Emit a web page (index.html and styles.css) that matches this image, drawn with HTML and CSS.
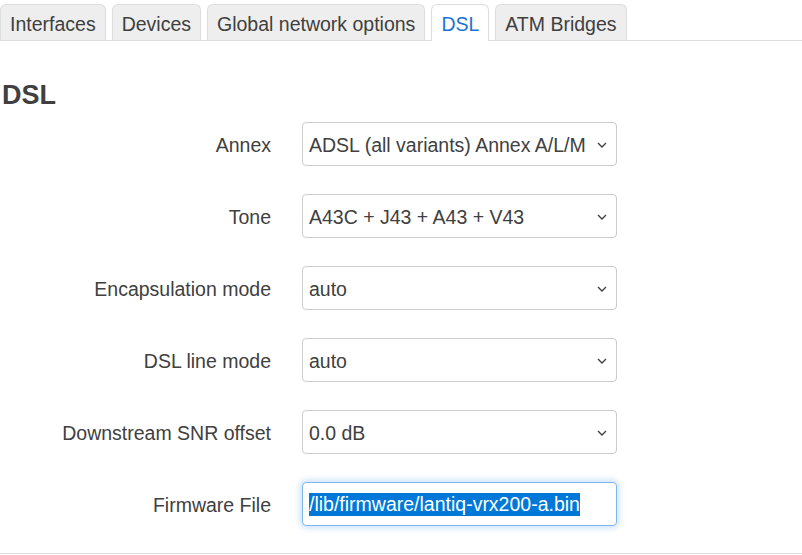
FILE: index.html
```html
<!DOCTYPE html>
<html lang="en">
<head>
<meta charset="utf-8">
<title>Network - DSL</title>
<link rel="stylesheet" href="styles.css">
</head>
<body>
  <ul class="tabmenu">
    <li class="tab"><a href="#">Interfaces</a></li>
    <li class="tab"><a href="#">Devices</a></li>
    <li class="tab"><a href="#">Global network options</a></li>
    <li class="tab active"><a href="#">DSL</a></li>
    <li class="tab"><a href="#">ATM Bridges</a></li>
  </ul>

  <section class="section">
    <h3 class="section-title">DSL</h3>

    <div class="fields">
      <div class="field">
        <label class="field-label">Annex</label>
        <div class="select-wrap">
          <select class="control">
            <option>ADSL (all variants) Annex A/L/M</option>
          </select>
          <svg class="chevron" viewBox="0 0 10 6" width="10" height="6"><path d="M1 1l4 4 4-4" fill="none" stroke="#404040" stroke-width="1.4"/></svg>
        </div>
      </div>

      <div class="field">
        <label class="field-label">Tone</label>
        <div class="select-wrap">
          <select class="control">
            <option>A43C + J43 + A43 + V43</option>
          </select>
          <svg class="chevron" viewBox="0 0 10 6" width="10" height="6"><path d="M1 1l4 4 4-4" fill="none" stroke="#404040" stroke-width="1.4"/></svg>
        </div>
      </div>

      <div class="field">
        <label class="field-label">Encapsulation mode</label>
        <div class="select-wrap">
          <select class="control">
            <option>auto</option>
          </select>
          <svg class="chevron" viewBox="0 0 10 6" width="10" height="6"><path d="M1 1l4 4 4-4" fill="none" stroke="#404040" stroke-width="1.4"/></svg>
        </div>
      </div>

      <div class="field">
        <label class="field-label">DSL line mode</label>
        <div class="select-wrap">
          <select class="control">
            <option>auto</option>
          </select>
          <svg class="chevron" viewBox="0 0 10 6" width="10" height="6"><path d="M1 1l4 4 4-4" fill="none" stroke="#404040" stroke-width="1.4"/></svg>
        </div>
      </div>

      <div class="field">
        <label class="field-label">Downstream SNR offset</label>
        <div class="select-wrap">
          <select class="control">
            <option>0.0 dB</option>
          </select>
          <svg class="chevron" viewBox="0 0 10 6" width="10" height="6"><path d="M1 1l4 4 4-4" fill="none" stroke="#404040" stroke-width="1.4"/></svg>
        </div>
      </div>

      <div class="field">
        <label class="field-label">Firmware File</label>
        <div class="control textfield focused"><span class="selected-text">/lib/firmware/lantiq-vrx200-a.bin</span></div>
      </div>
    </div>
  </section>
</body>
</html>
```

FILE: styles.css
```css
html, body {
  margin: 0;
  padding: 0;
  background: #fff;
}

body {
  font-family: "Liberation Sans", Arial, sans-serif;
  font-size: 19.5px;
  color: #404040;
  width: 802px;
  height: 555px;
  overflow: hidden;
}

/* tab strip */
.tabmenu {
  list-style: none;
  margin: 0;
  padding: 4px 0 0 0;
  display: flex;
  gap: 6px;
  border-bottom: 1px solid #ddd;
}

.tab {
  margin-bottom: -1px;
}

.tab a {
  display: block;
  box-sizing: border-box;
  height: 36px;
  line-height: 34px;
  padding: 2px 9px 0;
  background: #eee;
  border: 1px solid #ddd;
  border-bottom: none;
  border-radius: 6px 6px 0 0;
  color: #404040;
  text-decoration: none;
}

.tab.active a {
  background: #fff;
  color: #1b74d4;
  height: 37px;
}

/* section */
.section {
  padding: 0 0 27px 2px;
  border-bottom: 1px solid #ddd;
}

.section-title {
  margin: 39px 0 12px 0;
  font-size: 27px;
  line-height: 30px;
  font-weight: bold;
  color: #404040;
}

.fields {
  display: flex;
  flex-direction: column;
  gap: 28px;
}

.field {
  display: grid;
  grid-template-columns: 269px 315px;
  column-gap: 31px;
  align-items: center;
}

.field-label {
  text-align: right;
  padding-top: 2px;
}

.select-wrap {
  position: relative;
}

.control {
  box-sizing: border-box;
  width: 315px;
  height: 44px;
  margin: 0;
  padding: 1px 6px 0;
  border: 1px solid #ccc;
  border-radius: 4px;
  background: #fff;
  font: inherit;
  color: #404040;
}

select.control {
  appearance: none;
  -webkit-appearance: none;
  display: block;
}

.chevron {
  position: absolute;
  right: 10px;
  top: 20px;
  pointer-events: none;
}

.textfield {
  display: flex;
  align-items: center;
}

.textfield.focused {
  border-color: #7fb8ef;
  box-shadow: 0 0 6px 2px rgba(102, 170, 235, 0.35);
}

.selected-text {
  background: #0078d7;
  color: #fff;
  line-height: 23px;
}
```
